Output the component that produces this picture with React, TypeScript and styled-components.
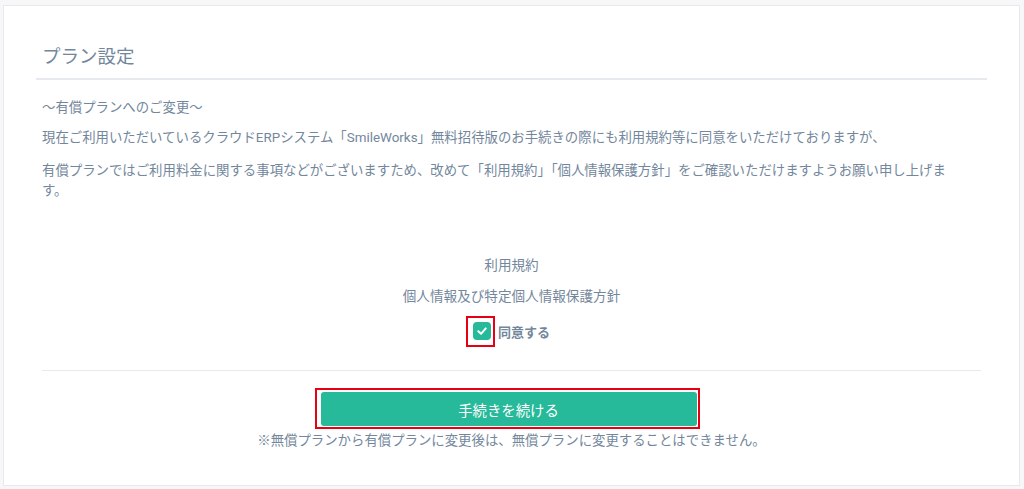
import React from 'react';
import styled, { createGlobalStyle } from 'styled-components';

const GlobalStyle = createGlobalStyle`
  body {
    margin: 0;
    background: #f7f7f7;
    font-family: "Helvetica Neue", Roboto, Arial, "Noto Sans CJK JP", sans-serif;
    color: #73879c;
  }
`;

const Page = styled.div`
  padding: 5px 4px 3px 3px;
`;

const Panel = styled.div`
  background: #fff;
  border: 1px solid #e6e9ed;
  padding: 0 32px 35px;
`;

const PanelTitle = styled.div`
  padding: 38px 6px 8px;
  border-bottom: 2px solid #e6e9ed;
`;

const Heading = styled.h2`
  margin: 0;
  font-size: 18.5px;
  font-weight: 400;
  line-height: 26px;
  color: #73879c;
`;

const Intro = styled.div`
  padding: 18px 27px 0 6px;
`;

const Text = styled.p<{ $after?: number }>`
  margin: 0 0 ${(p) => p.$after ?? 0}px;
  font-size: 13.4px;
  line-height: 20px;
`;

const Agreement = styled.div`
  margin-top: 54px;
  display: flex;
  flex-direction: column;
  align-items: center;
  gap: 11px;
`;

const DocLink = styled.a`
  font-size: 13.6px;
  line-height: 20px;
  color: #73879c;
  text-decoration: none;
`;

const CheckRow = styled.label`
  margin-top: 4px;
  display: flex;
  align-items: center;
  gap: 7px;
  height: 20px;
  font-size: 13px;
  font-weight: 700;
  color: #73879c;
`;

const CheckWrap = styled.span`
  position: relative;
  display: inline-flex;
`;

const CheckBox = styled.span`
  width: 18px;
  height: 18px;
  border-radius: 4px;
  background: #26b99a;
  display: flex;
  align-items: center;
  justify-content: center;
`;

const Marker = styled.span`
  position: absolute;
  left: -7px;
  top: -6px;
  width: 29px;
  height: 31px;
  box-sizing: border-box;
  border: 2px solid #e60012;
`;

const Footer = styled.div`
  margin: 29px 6px 0;
  border-top: 1px solid #e6e9ed;
  padding-top: 17px;
  display: flex;
  flex-direction: column;
  align-items: center;
`;

const ButtonFrame = styled.div`
  margin-right: 9px;
  border: 2px solid #e60012;
  padding: 2px 1px 1px 4px;
`;

const SubmitButton = styled.button`
  display: block;
  width: 376px;
  height: 34px;
  border: none;
  border-radius: 3px;
  background: #26b99a;
  color: #fff;
  font-family: inherit;
  font-size: 14.4px;
  cursor: pointer;
`;

const Note = styled.p`
  margin: 3px 0 0;
  font-size: 13.4px;
  line-height: 18px;
`;

const App = () => {
  return (
    <Page>
      <GlobalStyle />
      <Panel>
        <PanelTitle>
          <Heading>プラン設定</Heading>
        </PanelTitle>
        <Intro>
          <Text $after={10}>～有償プランへのご変更～</Text>
          <Text $after={13}>
            現在ご利用いただいているクラウドERPシステム「SmileWorks」無料招待版のお手続きの際にも利用規約等に同意をいただけておりますが、
          </Text>
          <Text>
            有償プランではご利用料金に関する事項などがございますため、改めて「利用規約」「個人情報保護方針」をご確認いただけますようお願い申し上げます。
          </Text>
        </Intro>
        <Agreement>
          <DocLink href="#">利用規約</DocLink>
          <DocLink href="#">個人情報及び特定個人情報保護方針</DocLink>
          <CheckRow>
            <CheckWrap>
              <CheckBox>
                <svg width="12" height="12" viewBox="0 0 12 12">
                  <polyline
                    points="2.3,6.3 5,8.8 9.8,3.4"
                    fill="none"
                    stroke="#fff"
                    strokeWidth="2"
                    strokeLinecap="round"
                    strokeLinejoin="round"
                  />
                </svg>
              </CheckBox>
              <Marker />
            </CheckWrap>
            同意する
          </CheckRow>
        </Agreement>
        <Footer>
          <ButtonFrame>
            <SubmitButton>手続きを続ける</SubmitButton>
          </ButtonFrame>
          <Note>※無償プランから有償プランに変更後は、無償プランに変更することはできません。</Note>
        </Footer>
      </Panel>
    </Page>
  );
};

export default App;
